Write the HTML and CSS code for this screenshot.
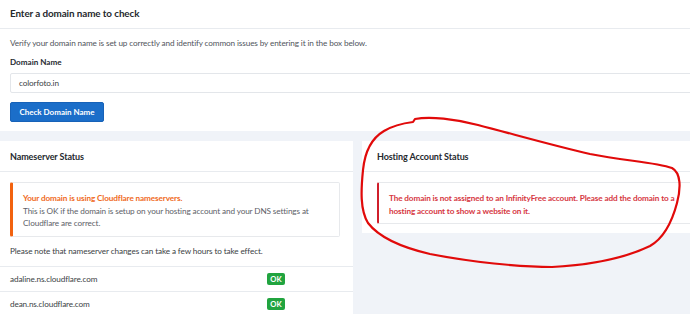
FILE: index.html
```html
<!DOCTYPE html>
<html lang="en">
<head>
<meta charset="utf-8">
<title>Domain Checker</title>
<link rel="stylesheet" href="styles.css">
</head>
<body>
<div class="page">
  <section class="card card-top">
    <div class="card-header">Enter a domain name to check</div>
    <div class="card-body top-body">
      <p class="intro">Verify your domain name is set up correctly and identify common issues by entering it in the box below.</p>
      <label class="field-label" for="domain">Domain Name</label>
      <div class="input" id="domain">colorfoto.in</div>
      <button class="btn" type="button">Check Domain Name</button>
    </div>
  </section>

  <div class="cols">
    <section class="card card-ns">
      <div class="card-header card-header-lg">Nameserver Status</div>
      <div class="card-body ns-body">
        <div class="alert alert-warning">
          <div class="alert-title">Your domain is using Cloudflare nameservers.</div>
          <div class="alert-text">This is OK if the domain is setup on your hosting account and your DNS settings at Cloudflare are correct.</div>
        </div>
        <p class="note">Please note that nameserver changes can take a few hours to take effect.</p>
      </div>
      <div class="ns-row"><span class="ns-name">adaline.ns.cloudflare.com</span><span class="badge">OK</span></div>
      <div class="ns-row"><span class="ns-name">dean.ns.cloudflare.com</span><span class="badge">OK</span></div>
    </section>

    <section class="card card-host">
      <div class="card-header card-header-lg">Hosting Account Status</div>
      <div class="card-body host-body">
        <div class="alert alert-danger">The domain is not assigned to an InfinityFree account. Please add the domain to a hosting account to show a website on it.</div>
      </div>
    </section>
  </div>

  <svg class="scribble" width="700" height="320" viewBox="0 0 700 320" aria-hidden="true">
    <path d="M413 122 L415 119 C430 116 455 119 478 125 C520 136 555 146 590 154 C625 161 655 162 672 168 C681 173 681 188 677 203 C672 222 664 238 650 246 C625 258 590 265 552 267 C520 267 470 262 430 254 C400 247 378 236 368 223 C360 210 361 190 363 170 C365 150 372 138 384 131 C394 125 405 123 413 122 Z" fill="none" stroke="#e10a0a" stroke-width="2.2" stroke-linejoin="round" stroke-linecap="round"/>
  </svg>
</div>
</body>
</html>
```

FILE: styles.css
```css
* { box-sizing: border-box; }

html, body {
  margin: 0;
  padding: 0;
  background: #f0f3f8;
  font-family: Lato, "Open Sans", sans-serif;
  color: #3b3f45;
  overflow: hidden;
}

.page {
  position: relative;
  width: 730px;
  margin-left: -5px;
  font-size: 8.2px;
  letter-spacing: -0.12px;
}

.card {
  background: #ffffff;
}

.card-header {
  height: 29px;
  padding: 7px 15px 0;
  font-size: 9.9px;
  line-height: 13px;
  font-weight: 700;
  letter-spacing: -0.1px;
  color: #25292e;
  border-bottom: 1px solid #e8ebef;
}

.card-header-lg {
  height: 31px;
  padding-top: 10px;
  font-size: 9px;
  line-height: 12px;
}

.top-body {
  padding: 8px 15px 9px;
}

.intro {
  margin: 0 0 7px;
  line-height: 12px;
  color: #50555c;
}

.field-label {
  display: block;
  margin-bottom: 5px;
  font-size: 8.1px;
  line-height: 12px;
  font-weight: 700;
  letter-spacing: 0;
  color: #25292e;
}

.input {
  height: 20px;
  padding: 0 8px;
  border: 1px solid #e3e6ea;
  border-radius: 2px;
  line-height: 18px;
  color: #3b3f45;
  background: #fff;
}

.btn {
  display: block;
  margin-top: 9px;
  height: 20px;
  width: 94px;
  padding: 0;
  border: 1px solid #1762b8;
  border-radius: 2px;
  background: #1b6ec9;
  color: #fff;
  font-family: inherit;
  font-size: 8px;
  font-weight: 700;
  letter-spacing: 0;
  line-height: 18px;
}

.cols {
  display: grid;
  grid-template-columns: 358px 1fr;
  column-gap: 9px;
  align-items: start;
  margin-top: 10px;
}

.ns-body {
  padding: 10px 15px 0;
}

.alert {
  background: #fff;
  border: 1px solid #e7e9ec;
  border-radius: 2px;
  line-height: 12.5px;
}

.alert-warning {
  height: 55px;
  padding: 9px 10px 0 10px;
  border-left: 3px solid #f2620f;
  margin-right: -2px;
}

.alert-title {
  color: #f06a1d;
  font-weight: 700;
}

.alert-text {
  color: #5d6168;
}

.note {
  margin: 8px 0 0;
  height: 21px;
  line-height: 12px;
  color: #3b3f45;
}

.ns-row {
  display: flex;
  align-items: center;
  height: 25px;
  padding: 0 15px;
  border-top: 1px solid #e8ebef;
  color: #3b3f45;
}

.ns-name {
  width: 257px;
}

.badge {
  display: inline-block;
  width: 18px;
  height: 12px;
  border-radius: 2px;
  background: #21a43f;
  color: #fff;
  font-size: 7.6px;
  font-weight: 700;
  letter-spacing: 0;
  line-height: 12px;
  text-align: center;
}

.host-body {
  padding: 10px 15px 9px;
}

.alert-danger {
  height: 42px;
  padding: 9px 10px 0 10px;
  border-left: 2px solid #d01f2b;
  color: #d6373f;
  font-weight: 700;
}

.scribble {
  position: absolute;
  left: 5px;
  top: 0;
  pointer-events: none;
}
```
